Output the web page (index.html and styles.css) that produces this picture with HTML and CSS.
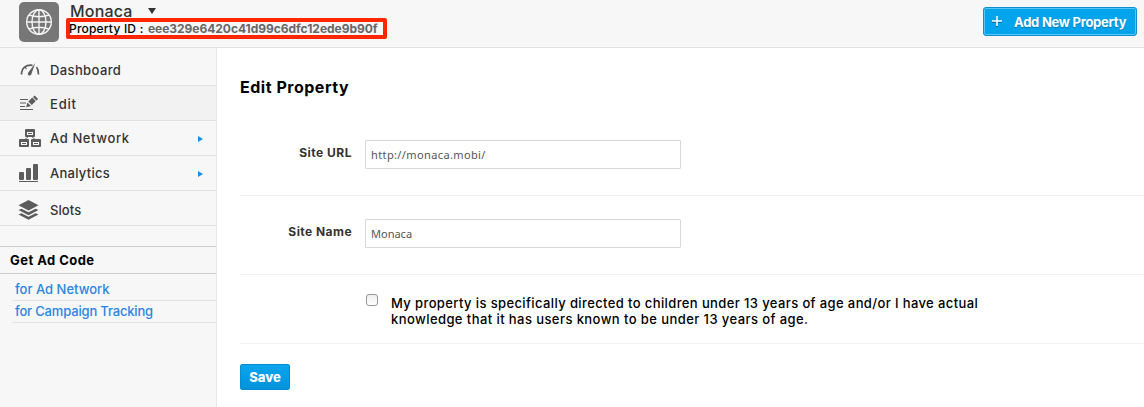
FILE: index.html
```html
<!DOCTYPE html>
<html lang="en">
<head>
<meta charset="utf-8">
<title>Edit Property</title>
<link rel="stylesheet" href="styles.css">
</head>
<body>
<header class="header">
  <div class="logo">
    <svg width="28" height="28" viewBox="0 0 28 28" fill="none" stroke="#f4f4f4" stroke-width="1.4">
      <circle cx="14" cy="14" r="12.3"/><ellipse cx="14" cy="14" rx="7" ry="12.3"/>
      <path d="M14 1.700v24.600M1.700 14h24.600M4 7q10 3.500 20 0M4 21q10-3.500 20 0"/>
    </svg>
  </div>
  <div class="property">
    <div class="property-name"><span class="name">Monaca</span><svg width="8" height="6" viewBox="0 0 8 6"><path d="M0 0h8L4 6z" fill="#333"/></svg></div>
    <div class="property-id"><span class="id-label">Property ID :</span><span class="id-value">eee329e6420c41d99c6dfc12ede9b90f</span></div>
  </div>
  <button class="add"><svg width="10" height="11" viewBox="0 0 10 11" fill="none" stroke-width="1.6"><path d="M0 6h10M5 1v10" stroke="#07618f"/><path d="M0 5h10M5 0v10" stroke="#fff"/></svg><span class="add-label">Add New Property</span></button>
</header>
<div class="body">
  <nav class="sidebar">
    <a class="item first"><svg class="icon" width="24" height="20" viewBox="0 0 24 20" fill="none" stroke="#5c5c5c"><path d="M3.500 14.500C3.500 8 8 4.500 14.500 5.300" stroke-width="1.700"/><path d="M7 7l1.500 2" stroke-width="1.200"/><path d="M18.500 7q2 2.500 2 7.500" stroke-width="1.700"/><path d="M17.300 3L10 13a1.700 1.700 0 0 0 3.200 1.500z" fill="#5c5c5c" stroke="none"/></svg><span class="t dash">Dashboard</span></a>
    <a class="item active"><svg class="icon" width="24" height="20" viewBox="0 0 24 20"><path d="M2 5.500h8M2 9h6M2 12.500h5M2 15.500h13" stroke="#5c5c5c" stroke-width="1.200"/><path d="M8 13.200l1.500-4.800 3.500 3.500zM10.300 7.600l4-4 3.500 3.500-4 4zM15 2.900l1.600-1.500 3.500 3.500-1.600 1.500z" fill="#5c5c5c"/></svg><span class="t edit">Edit</span></a>
    <a class="item adnet"><svg class="icon" width="24" height="20" viewBox="0 0 24 20"><path d="M10 9L6 12M14 9l4 3" stroke="#777" stroke-width="1"/><g fill="#5c5c5c"><rect x="7" y="1" width="10" height="8" rx="1"/><rect x="1" y="11" width="10" height="8" rx="1"/><rect x="13" y="11" width="10" height="8" rx="1"/></g><path d="M9 4h6v3H9zM3 14h6v3H3zM15 14h6v3h-6z" fill="#f7f7f7"/><path d="M10 5.500h4M4 15.500h4M16 15.500h4" stroke="#5c5c5c"/></svg><span class="t network">Ad Network</span><svg class="arrow" width="5" height="6" viewBox="0 0 5 6"><path d="M0 0l5 3-5 3z" fill="#1b8fe4"/></svg></a>
    <a class="item analytics-row"><svg class="icon" width="24" height="20" viewBox="0 0 24 20" fill="#5c5c5c"><rect x="1" y="9" width="5" height="8" rx="1"/><rect x="8" y="5" width="5" height="12" rx="1"/><rect x="15" y="1" width="5" height="16" rx="1"/><rect x="1" y="18" width="19" height="1"/></svg><span class="t analytics">Analytics</span><svg class="arrow" width="5" height="6" viewBox="0 0 5 6"><path d="M0 0l5 3-5 3z" fill="#1b8fe4"/></svg></a>
    <a class="item slots-row"><svg class="icon" width="24" height="20" viewBox="0 0 24 20" fill="#5c5c5c"><path d="M10.500 0L20.500 5.200l-10 5.300L.5 5.200z"/><path d="M.5 10l3-1.300 7 3.600 7-3.600 3 1.300-10 5.200zM.5 14.500l3-1.300 7 3.600 7-3.600 3 1.300-10 5.300z"/></svg><span class="t slots">Slots</span></a>
    <div class="code-title"><span class="get-code">Get Ad Code</span></div>
    <div class="links">
      <a class="link"><span class="for-network">for Ad Network</span></a>
      <a class="link second"><span class="for-campaign">for Campaign Tracking</span></a>
    </div>
  </nav>
  <main class="main">
    <h1 class="title"><span class="title-text">Edit Property</span></h1>
    <div class="row url-row"><label class="label"><span class="url-label">Site URL</span></label><div class="input"><span class="url-value">http://monaca.mobi/</span></div></div>
    <div class="row"><label class="label"><span class="name-label">Site Name</span></label><div class="input"><span class="name-value">Monaca</span></div></div>
    <div class="row consent"><span class="checkbox"></span><p class="statement"><span class="line-a">My property is specifically directed to children under 13 years of age and/or I have actual</span><br><span class="line-b">knowledge that it has users known to be under 13 years of age.</span></p></div>
    <button class="save"><span class="save-label">Save</span></button>
  </main>
</div>
</body>
</html>
```
FILE: styles.css
```css
* { box-sizing: border-box; }
body { margin: 0; height: 407px; overflow: hidden; background: #fff; color: #000; font: 500 13px/16px Inter, "Liberation Sans", sans-serif; }
span { white-space: nowrap; }
.header { display: flex; height: 48px; background: #f7f7f7; border-bottom: 1px solid #e2e2e2; padding-left: 19px; }
.logo { width: 40px; height: 40px; margin-top: 2px; border-radius: 5px; background: #777; display: grid; place-items: center; }
.property { margin-left: 7px; }
.property-name { display: flex; align-items: center; height: 18px; padding: 4px 0 0 4px; font-size: 16px; color: #333; }
.name { width: 78px; letter-spacing: .2px; }
.property-id { display: flex; align-items: center; width: 321px; height: 21px; border: 4px solid #ff2600; border-radius: 2px; font-size: 12px; }
.id-label { width: 79px; margin-left: -1px; letter-spacing: .2px; }
.id-value { font-weight: 700; color: #666; letter-spacing: -.03px; }
.add { display: flex; align-items: center; width: 154px; height: 29px; margin: 7px 7px 0 auto; padding: 0 0 0 8px; border: 1px solid #0c8fd0; border-radius: 3px; background: #00a4ec; box-shadow: inset 0 0 0 1px #5ac4f3; color: #fff; font: 700 13px/16px Inter, sans-serif; text-shadow: 0 1px 1px #0878b0; }
.add-label { margin-left: 12px; letter-spacing: -.25px; }
.body { display: flex; height: 359px; }
.sidebar { width: 217px; background: #f7f7f7; border-right: 1px solid #e8e8e8; }
.item { display: flex; align-items: center; height: 35px; padding-left: 18px; border-bottom: 1px solid #e2e2e2; color: #333; }
.first { height: 38px; padding-top: 7px; }
.active { background: #f2f2f2; padding-top: 2px; }
.adnet, .analytics-row { padding-bottom: 1px; }
.slots-row { padding-top: 3px; }
.icon { flex: none; margin-right: 8px; }
.arrow { margin: 2px 13px 0 auto; }
.dash { letter-spacing: .38px; }
.edit { letter-spacing: .8px; }
.network { letter-spacing: .6px; }
.analytics { letter-spacing: .27px; }
.slots { letter-spacing: .1px; }
.code-title { height: 28px; margin-top: 20px; padding: 5px 0 0 10px; border-top: 1px solid #ccc; border-bottom: 1px solid #ccc; font-weight: 700; }
.get-code { letter-spacing: .45px; }
.links { padding-left: 12px; color: #2a86df; }
.link { display: block; height: 27px; padding: 7px 0 0 3px; border-bottom: 1px solid #e2e2e2; }
.second { height: 22px; padding-top: 2px; }
.for-campaign { letter-spacing: -.17px; }
.main { flex: 1; padding-left: 23px; }
.title { margin: 0; height: 68px; padding-top: 29px; font-size: 16px; line-height: 20px; font-weight: 700; }
.title-text { letter-spacing: .52px; }
.row { display: flex; height: 79px; padding-top: 23px; border-bottom: 1px solid #f0f0f0; }
.url-row { height: 80px; padding-top: 24px; }
.label { width: 112px; margin-right: 13px; padding-top: 5px; text-align: right; font-size: 12px; font-weight: 700; color: #333; }
.url-label { letter-spacing: .5px; }
.name-label { letter-spacing: .45px; }
.input { width: 316px; height: 29px; border: 1px solid #d8d8d8; border-radius: 1px; padding: 6px 0 0 5px; font: 11px/16px "Noto Sans", sans-serif; color: #555; }
.url-value { letter-spacing: .38px; }
.consent { height: 69px; padding: 19px 0 0 126px; }
.checkbox { width: 12px; height: 12px; border: 1px solid #999; border-radius: 3px; background: linear-gradient(#eee, #fff); }
.statement { margin: 1px 0 0 13px; }
.line-a { letter-spacing: .385px; }
.line-b { letter-spacing: .42px; }
.save { display: block; width: 50px; height: 26px; margin-top: 20px; padding: 0; border: 1px solid #078dd3; border-radius: 2px; background: linear-gradient(#0aa5ed, #0093dc); color: #fff; font: 800 13px/16px Inter, sans-serif; }
```
